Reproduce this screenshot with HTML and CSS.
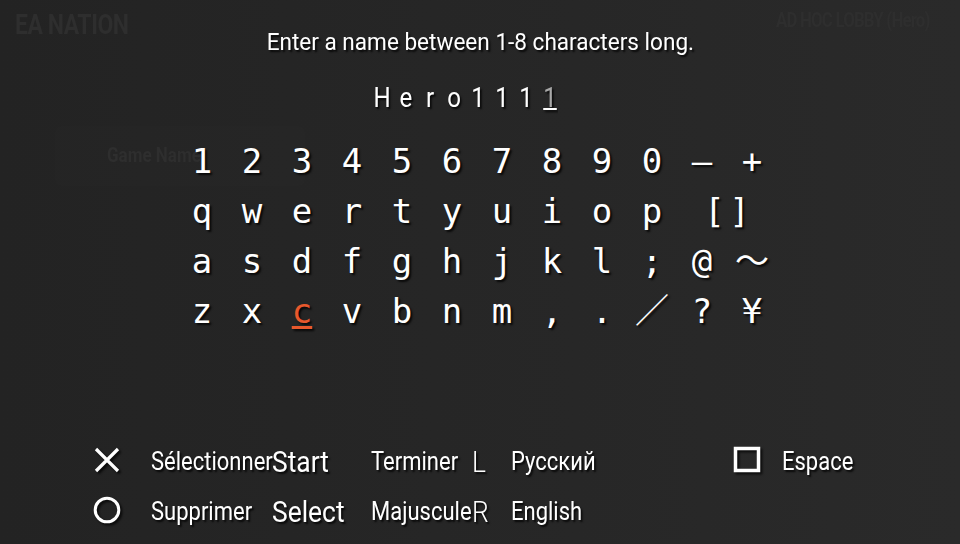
FILE: index.html
```html
<!DOCTYPE html>
<html>
<head>
<title>Name entry keyboard</title>
<meta name="viewport" content="width=device-width, initial-scale=1">
<link rel="stylesheet" href="styles.css">
</head>
<body>

<!-- dimmed lobby screen behind the keyboard overlay -->
<div class="backdrop">
	<span class="ghost ghost-logo">EA NATION</span>
	<span class="ghost ghost-lobby">AD HOC LOBBY (Hero)</span>
	<div class="ghost-panel"><span class="ghost ghost-field">Game Name</span></div>
</div>

<main class="osk">
	<p class="prompt"><span class="cond">Enter a name between 1-8 characters long.</span></p>

	<div class="entry">
		<span>H</span><span>e</span><span>r</span><span>o</span><span>1</span><span>1</span><span>1</span><span class="cursor">1</span>
	</div>

	<div class="keys">
		<span>1</span><span>2</span><span>3</span><span>4</span><span>5</span><span>6</span><span>7</span><span>8</span><span>9</span><span>0</span><span>—</span><span>+</span>
		<span>q</span><span>w</span><span>e</span><span>r</span><span>t</span><span>y</span><span>u</span><span>i</span><span>o</span><span>p</span><span class="wide">[ ]</span>
		<span>a</span><span>s</span><span>d</span><span>f</span><span>g</span><span>h</span><span>j</span><span>k</span><span>l</span><span>;</span><span>@</span><span>～</span>
		<span>z</span><span>x</span><span class="selected">c</span><span>v</span><span>b</span><span>n</span><span>m</span><span>,</span><span>.</span><span>／</span><span>?</span><span>¥</span>
	</div>

	<div class="legend">
		<span class="icon"><svg width="28" height="28" viewBox="0 0 28 28"><path d="M3 3 L25 25 M25 3 L3 25" stroke="#fff" stroke-width="3.2" fill="none"/></svg></span>
		<span class="cond">Sélectionner</span>
		<span class="cond big">Start</span>
		<span class="cond">Terminer</span>
		<span class="cond big thin">L</span>
		<span class="cond">Русский</span>
		<span class="icon"><svg width="28" height="28" viewBox="0 0 28 28"><rect x="2.5" y="2.5" width="23" height="22" stroke="#fff" stroke-width="3.5" fill="none"/></svg></span>
		<span class="cond">Espace</span>

		<span class="icon"><svg width="28" height="28" viewBox="0 0 28 28"><circle cx="14" cy="14" r="11.8" stroke="#fff" stroke-width="3" fill="none"/></svg></span>
		<span class="cond">Supprimer</span>
		<span class="cond big">Select</span>
		<span class="cond">Majuscule</span>
		<span class="cond big thin">R</span>
		<span class="cond">English</span>
	</div>
</main>

</body>
</html>
```

FILE: styles.css
```css
html, body {
	margin: 0;
	height: 100%;
}
body {
	width: 960px;
	height: 544px;
	overflow: hidden;
	position: relative;
	background: linear-gradient(90deg, #232323, #272727 60%, #2a2a2a);
	color: #fff;
	font-family: Roboto, "Liberation Sans", sans-serif;
}

/* condensed look: Roboto squeezed horizontally */
.cond {
	display: inline-block;
	transform: scaleX(0.88);
	transform-origin: left center;
	white-space: nowrap;
}

.backdrop {
	position: absolute;
	inset: 0;
}
.ghost {
	position: absolute;
	color: #2e2e2e;
	font-weight: 700;
	white-space: nowrap;
	transform: scaleX(0.85);
	transform-origin: left center;
}
.ghost-logo {
	left: 15px;
	top: 9px;
	font-size: 27px;
	letter-spacing: -0.5px;
}
.ghost-lobby {
	left: 776px;
	top: 8px;
	font-size: 21px;
	letter-spacing: -1px;
	transform: scaleX(0.8);
}
.ghost-panel {
	position: absolute;
	left: 55px;
	top: 126px;
	width: 250px;
	height: 60px;
	border-radius: 6px;
	background: rgba(255,255,255,0.008);
}
.ghost-field {
	left: 52px;
	top: 17px;
	font-size: 20px;
}

.osk {
	position: relative;
	text-shadow: 2px 2px 2px rgba(0,0,0,0.8);
}

.prompt {
	margin: 0;
	padding-top: 28px;
	text-align: center;
	font-size: 24px;
	line-height: 28px;
}
.prompt .cond {
	transform: scaleX(0.94);
	transform-origin: center;
}

.entry {
	display: flex;
	margin: 26px 0 0 370px;
	font-size: 28px;
	line-height: 32px;
}
.entry span {
	display: inline-block;
	width: 24px;
	text-align: center;
	transform: scaleX(0.86);
}
.entry .cursor {
	color: #a8a8a8;
	text-decoration: underline #fff;
	text-decoration-thickness: 2px;
	text-underline-offset: 1px;
}

.keys {
	display: grid;
	grid-template-columns: repeat(12, 50px);
	grid-auto-rows: 50px;
	margin: 22px 0 0 177px;
	font-family: "DejaVu Sans Mono", "Noto Sans CJK JP", monospace;
	font-size: 34px;
	line-height: 50px;
	text-align: center;
}
.keys .wide {
	grid-column: span 2;
	letter-spacing: -8px;
	text-indent: -8px;
}
.keys .selected {
	color: #e8582c;
	text-decoration: underline;
	text-decoration-thickness: 3px;
	text-underline-offset: 3px;
}

.legend {
	display: grid;
	grid-template-columns: 58px 121px 99px 101px 39px 222px 49px auto;
	grid-auto-rows: 50px;
	margin: 101px 0 0 93px;
	font-size: 25px;
	line-height: 50px;
}
.legend .big {
	font-size: 30px;
}
.legend .thin {
	font-weight: 300;
}
.icon {
	display: flex;
	align-items: center;
	margin-top: -4px;
}
.icon svg {
	filter: drop-shadow(2px 2px 1px rgba(0,0,0,0.75));
}
```
